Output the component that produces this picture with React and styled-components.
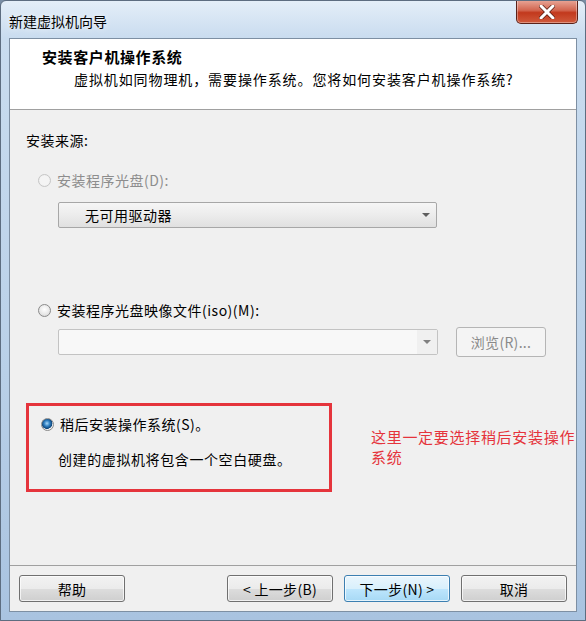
import React from "react";
import styled, { createGlobalStyle } from "styled-components";

const GlobalStyle = createGlobalStyle`
    html, body {
        margin: 0;
        padding: 0;
        background: #7a8ea5;
    }
    body {
        font-family: "Noto Sans CJK SC", "Liberation Sans", sans-serif;
        font-size: 14px;
        color: #000;
    }
`;

const Window = styled.div`
    width: 586px;
    height: 621px;
    box-sizing: border-box;
    display: flex;
    flex-direction: column;
    padding: 0 8px 8px 8px;
    border: 1px solid #5d6d80;
    border-radius: 6px 6px 0 0;
    background: linear-gradient(180deg, #e4eef8 0%, #c9dcef 6%, #b9d0e8 60%, #a9c3e0 100%);
    overflow: hidden;
`;

const TitleBar = styled.div`
    height: 37px;
    display: flex;
    align-items: flex-start;
    justify-content: space-between;
    flex-shrink: 0;
`;

const Title = styled.div`
    margin-top: 11px;
    font-size: 14px;
    line-height: 18px;
    color: #000;
    text-shadow: 0 0 6px rgba(255, 255, 255, 0.9);
`;

const CloseButton = styled.div`
    width: 60px;
    height: 23px;
    margin-right: -1px;
    margin-top: -1px;
    display: flex;
    align-items: center;
    justify-content: center;
    border: 1px solid #5b2118;
    border-top: none;
    border-radius: 0 0 5px 5px;
    background: linear-gradient(180deg, #e9a899 0%, #d2654f 45%, #c2391d 55%, #d05a3c 100%);
    box-shadow: inset 0 0 0 1px rgba(255, 255, 255, 0.35);
`;

const Client = styled.div`
    flex: 1;
    display: flex;
    flex-direction: column;
    border: 1px solid #7d8fa3;
    background: #f0f0f0;
`;

const Header = styled.div`
    height: 71px;
    flex-shrink: 0;
    box-sizing: border-box;
    background: #fff;
    border-bottom: 1px solid #a0a0a0;
    padding: 8px 0 0 32px;
`;

const HeaderTitle = styled.div`
    font-weight: bold;
    font-size: 15px;
    line-height: 20px;
    letter-spacing: 0.6px;
`;

const HeaderSub = styled.div`
    margin: 2px 0 0 32px;
    font-size: 14px;
    line-height: 20px;
    letter-spacing: 0.9px;
`;

const Body = styled.div`
    flex: 1;
    display: flex;
    flex-direction: column;
    padding: 21px 0 0 16px;
`;

const Label = styled.div`
    line-height: 18px;
    letter-spacing: 0.5px;
    color: ${(p) => (p.$disabled ? "#8d8d8d" : "#000")};
`;

const RadioRow = styled.label`
    display: flex;
    align-items: center;
    gap: 6px;
    margin: ${(p) => p.$margin || "0"};
    padding-left: 12px;
    line-height: 18px;
    letter-spacing: 0.5px;
    color: ${(p) => (p.$disabled ? "#8d8d8d" : "#000")};
`;

const RadioDot = styled.span`
    width: 11px;
    height: 11px;
    border-radius: 50%;
    flex-shrink: 0;
    border: 1px solid ${(p) => (p.$disabled ? "#c6c6c6" : "#8a8a8a")};
    background: ${(p) =>
        p.$checked
            ? "radial-gradient(circle at 45% 40%, #a8d8f8 0%, #2f7fc1 32%, #0f4578 58%, #f4f4f4 64%, #dcdcdc 100%)"
            : p.$disabled
            ? "radial-gradient(circle, #f4f4f4 0%, #f4f4f4 55%, #e6e6e6 100%)"
            : "radial-gradient(circle at 50% 40%, #ffffff 0%, #e9e9e9 55%, #cfcfcf 100%)"};
`;

const Combo = styled.div`
    width: 379px;
    height: 26px;
    box-sizing: border-box;
    display: flex;
    align-items: center;
    justify-content: space-between;
    margin: ${(p) => p.$margin || "0"};
    border: 1px solid ${(p) => (p.$disabled ? "#c3c3c3" : "#a7a7a7")};
    border-radius: 2px;
    background: ${(p) =>
        p.$disabled ? "#f4f4f4" : "linear-gradient(180deg, #f6f6f6 0%, #ececec 50%, #e0e0e0 100%)"};
    padding-left: 26px;
    letter-spacing: 0.5px;
`;

const ComboArrow = styled.span`
    width: 20px;
    height: 100%;
    display: flex;
    align-items: center;
    justify-content: center;
    background: ${(p) => (p.$light ? "#f0f0f0" : "transparent")};
    &::after {
        content: "";
        border-left: 4px solid transparent;
        border-right: 4px solid transparent;
        border-top: 4px solid ${(p) => (p.$light ? "#808080" : "#5e5e5e")};
    }
`;

const IsoRow = styled.div`
    display: flex;
    align-items: center;
    gap: 18px;
    margin: 8px 0 0 32px;
`;

const IsoField = styled(Combo)`
    width: 380px;
    height: 26px;
    margin: 0;
    padding: 0;
    background: #f8f8f8;
    justify-content: flex-end;
`;

const Button = styled.div`
    width: 106px;
    height: 27px;
    box-sizing: border-box;
    display: flex;
    align-items: center;
    justify-content: center;
    border: 1px solid ${(p) => (p.$focused ? "#3c7fb1" : "#707070")};
    border-radius: 3px;
    background: ${(p) =>
        p.$focused
            ? "linear-gradient(180deg, #eaf6fd 0%, #d9f0fc 50%, #bee6fd 51%, #a7d9f5 100%)"
            : "linear-gradient(180deg, #f2f2f2 0%, #ebebeb 50%, #dddddd 51%, #cfcfcf 100%)"};
    box-shadow: inset 0 0 0 1px rgba(255, 255, 255, 0.7);
    font-size: 14px;
    letter-spacing: 0.3px;
`;

const BrowseButton = styled(Button)`
    width: 90px;
    height: 30px;
    border-color: #b5b5b5;
    background: #f4f4f4;
    color: #8a8a8a;
    box-shadow: none;
`;

const LaterRow = styled.div`
    display: flex;
    align-items: flex-start;
    margin-top: 46px;
`;

const Highlight = styled.div`
    width: 306px;
    height: 89px;
    flex-shrink: 0;
    box-sizing: border-box;
    border: 3px solid #e5343c;
    padding-top: 9px;
`;

const Hint = styled.div`
    line-height: 18px;
    letter-spacing: 0.6px;
    margin: 17px 0 0 29px;
`;

const Note = styled.div`
    margin: 24px 0 0 39px;
    width: 212px;
    flex-shrink: 0;
    font-size: 15px;
    line-height: 20px;
    letter-spacing: 0.7px;
    color: #e5343c;
`;

const Footer = styled.div`
    height: 46px;
    flex-shrink: 0;
    box-sizing: border-box;
    border-top: 1px solid #a0a0a0;
    display: flex;
    align-items: flex-start;
    padding: 9px 9px 0 9px;
    gap: 11px;
`;

const Spacer = styled.div`
    flex: 1;
`;

const CloseIcon = () => (
    <svg width="16" height="14" viewBox="0 0 16 14">
        <path
            d="M2 1 L14 13 M14 1 L2 13"
            stroke="#5a1d12"
            strokeWidth="4.5"
            fill="none"
            strokeLinecap="round"
        />
        <path
            d="M2 1 L14 13 M14 1 L2 13"
            stroke="#ffffff"
            strokeWidth="3"
            fill="none"
            strokeLinecap="round"
        />
    </svg>
);

const App = () => {
    return (
        <>
            <GlobalStyle />
            <Window>
                <TitleBar>
                    <Title>新建虚拟机向导</Title>
                    <CloseButton>
                        <CloseIcon />
                    </CloseButton>
                </TitleBar>
                <Client>
                    <Header>
                        <HeaderTitle>安装客户机操作系统</HeaderTitle>
                        <HeaderSub>虚拟机如同物理机，需要操作系统。您将如何安装客户机操作系统?</HeaderSub>
                    </Header>
                    <Body>
                        <Label>安装来源:</Label>
                        <RadioRow $disabled $margin="22px 0 0 0">
                            <RadioDot $disabled />
                            安装程序光盘(D):
                        </RadioRow>
                        <Combo $margin="13px 0 0 32px">
                            无可用驱动器
                            <ComboArrow />
                        </Combo>
                        <RadioRow $margin="73px 0 0 0">
                            <RadioDot />
                            安装程序光盘映像文件(iso)(M):
                        </RadioRow>
                        <IsoRow>
                            <IsoField $disabled>
                                <ComboArrow $light />
                            </IsoField>
                            <BrowseButton>浏览(R)...</BrowseButton>
                        </IsoRow>
                        <LaterRow>
                            <Highlight>
                                <RadioRow>
                                    <RadioDot $checked />
                                    稍后安装操作系统(S)。
                                </RadioRow>
                                <Hint>创建的虚拟机将包含一个空白硬盘。</Hint>
                            </Highlight>
                            <Note>这里一定要选择稍后安装操作系统</Note>
                        </LaterRow>
                    </Body>
                    <Footer>
                        <Button>帮助</Button>
                        <Spacer />
                        <Button>&lt; 上一步(B)</Button>
                        <Button $focused>下一步(N) &gt;</Button>
                        <Button>取消</Button>
                    </Footer>
                </Client>
            </Window>
        </>
    );
};

export default App;
